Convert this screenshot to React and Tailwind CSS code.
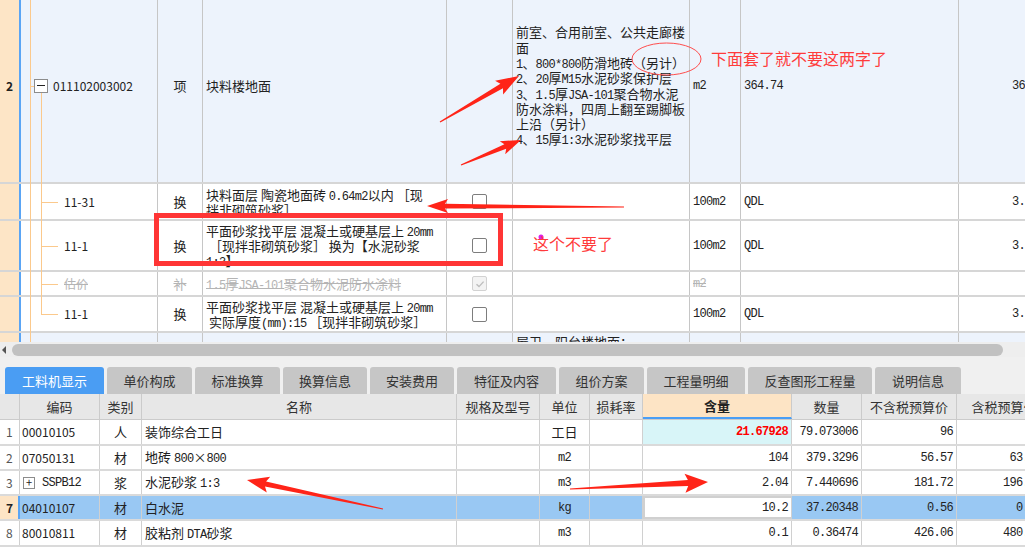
import React from "react";

const MONO = "font-['Liberation_Mono',monospace] text-[12px] tracking-[-0.7px]";
const LINE = "bg-[#fbc98c]";

// ascii runs look like SimSun half-width text in the reference, give them the mono face
function Mixed({ s }) {
  return (
    <span>
      {s.split(/([\x21-\x7e]+)/).map((p, i) =>
        i % 2 ? (
          <span key={i} className={MONO}>
            {p}
          </span>
        ) : (
          <React.Fragment key={i}>{p}</React.Fragment>
        )
      )}
    </span>
  );
}

function Tree({ kind }) {
  return (
    <>
      <span className={`absolute left-[9px] top-0 bottom-[-2px] w-px ${LINE}`} />
      {kind === "root" && (
        <>
          <span className={`absolute left-[9px] top-1/2 w-[5px] h-px ${LINE}`} />
          <span className={`absolute left-[20px] top-[calc(50%_+_7px)] bottom-[-2px] w-px ${LINE}`} />
          <span className="absolute left-[13px] top-1/2 -translate-y-1/2 w-[14px] h-[14px] border border-[#8c8c8c] bg-white flex items-center justify-center">
            <span className="w-[8px] h-px bg-[#222]" />
          </span>
        </>
      )}
      {kind === "child" && (
        <>
          <span className={`absolute left-[20px] top-0 bottom-[-2px] w-px ${LINE}`} />
          <span className={`absolute left-[20px] top-1/2 w-[17px] h-px ${LINE}`} />
        </>
      )}
      {kind === "last" && (
        <>
          <span className={`absolute left-[20px] top-0 h-1/2 w-px ${LINE}`} />
          <span className={`absolute left-[20px] top-1/2 w-[17px] h-px ${LINE}`} />
        </>
      )}
    </>
  );
}

function Box({ checked }) {
  if (checked)
    return (
      <span className="w-[15px] h-[15px] rounded-[2px] border border-[#d2d2d2] bg-[#f3f3f3] flex items-center justify-center">
        <svg width="10" height="10" viewBox="0 0 10 10">
          <path d="M1.5 5.2 L4 7.6 L8.6 2.6" fill="none" stroke="#bdbdbd" strokeWidth="1.4" />
        </svg>
      </span>
    );
  return <span className="w-[15px] h-[15px] rounded-[2px] border border-[#7d7d7d] bg-white" />;
}

function Lines({ lines, lh = "h-[15px] leading-[15px]" }) {
  return (
    <div className="flex flex-col">
      {lines.map((l, i) => (
        <div key={i} className={`whitespace-pre ${lh}`}>
          <Mixed s={l} />
        </div>
      ))}
    </div>
  );
}

function TopRow({ h, bg = "bg-white", num, tree, code, type, name, box, desc, descPad = "items-center", unit, expr, qty, muted }) {
  const txt = muted ? "text-[#b4b4b4] line-through" : "text-[#222]";
  return (
    <div className={`flex w-[1054px] ${h} ${bg} border-b-2 border-[#d6d6d6] ${txt}`}>
      <div className="w-[21px] shrink-0 bg-[#fde5c6] border-r-2 border-[#5aa5f5] flex items-center pl-[6px] text-[12px] font-bold text-[#222]">
        {num}
      </div>
      <div className={`relative w-[137px] shrink-0 border-r border-[#c6c6c6] flex items-center text-[12px] ${tree === "root" ? "pl-[32px]" : "pl-[43px]"}`}>
        <Tree kind={tree} />
        <span className="relative">{code}</span>
      </div>
      <div className="w-[45px] shrink-0 border-r border-[#c6c6c6] flex items-center justify-center text-[13px]">{type}</div>
      <div className="w-[244px] shrink-0 border-r border-[#c6c6c6] flex items-center px-[3px] text-[13px] overflow-hidden">{name}</div>
      <div className="w-[66px] shrink-0 border-r border-[#c6c6c6] flex items-center justify-center">{box && <Box checked={box === "checked"} />}</div>
      <div className={`w-[177px] shrink-0 border-r border-[#c6c6c6] flex ${descPad} pl-[3px] text-[13px] overflow-hidden`}>{desc}</div>
      <div className={`w-[51px] shrink-0 border-r border-[#c6c6c6] flex items-center pl-[3px] ${MONO}`}>{unit}</div>
      <div className={`w-[218px] shrink-0 border-r border-[#c6c6c6] flex items-center pl-[3px] ${MONO}`}>{expr}</div>
      <div className={`w-[95px] shrink-0 flex items-center justify-end pr-[3px] ${MONO}`}>{qty}</div>
    </div>
  );
}

function TopGrid() {
  return (
    <div className="h-[342px] overflow-hidden bg-[#edf3fc]">
      <TopRow
        h="h-[195px] mt-[-11px]"
        bg="bg-[#edf3fc]"
        num="2"
        tree="root"
        code="011102003002"
        type="项"
        name="块料楼地面"
        desc={
          <Lines
            lh="h-[15.3px] leading-[15.3px]"
            lines={[
              "前室、合用前室、公共走廊楼",
              "面",
              "1、800*800防滑地砖（另计）",
              "2、20厚M15水泥砂浆保护层",
              "3、1.5厚JSA-101聚合物水泥",
              "防水涂料，四周上翻至踢脚板",
              "上沿（另计）",
              "4、15厚1:3水泥砂浆找平层",
            ]}
          />
        }
        unit="m2"
        expr="364.74"
        qty="364.74"
      />
      <TopRow
        h="h-[37px]"
        tree="child"
        code="11-31"
        type="换"
        name={<Lines lines={["块料面层 陶瓷地面砖 0.64m2以内 ［现", "拌非砌筑砂浆］"]} />}
        box="empty"
        unit="100m2"
        expr="QDL"
        qty="3.6474"
      />
      <TopRow
        h="h-[51px]"
        tree="child"
        code="11-1"
        type="换"
        name={<Lines lines={["平面砂浆找平层 混凝土或硬基层上 20mm", " ［现拌非砌筑砂浆］ 换为【水泥砂浆", "1:3】"]} />}
        box="empty"
        unit="100m2"
        expr="QDL"
        qty="3.6474"
      />
      <TopRow
        h="h-[25px]"
        tree="child"
        code="估价"
        type="补"
        name={<Lines lines={["1.5厚JSA-101聚合物水泥防水涂料"]} />}
        box="checked"
        unit="m2"
        muted
      />
      <TopRow
        h="h-[36px]"
        tree="last"
        code="11-1"
        type="换"
        name={<Lines lines={["平面砂浆找平层 混凝土或硬基层上 20mm", " 实际厚度(mm):15 ［现拌非砌筑砂浆］"]} />}
        box="empty"
        unit="100m2"
        expr="QDL"
        qty="3.6474"
      />
      <TopRow
        h="h-[40px]"
        bg="bg-[#edf3fc]"
        tree="none"
        desc={<div className="pt-[1px] leading-[15px]">屋卫、阳台楼地面：</div>}
        descPad="items-start"
      />
    </div>
  );
}

function ScrollBar() {
  return (
    <div className="h-[15px] bg-[#eeeeee] flex items-center pl-[2px]">
      <span className="w-0 h-0 border-y-[4px] border-y-transparent border-r-[4px] border-r-[#555]" />
      <span className="ml-[6px] w-[991px] h-[12px] rounded-full bg-[#c1c1c1]" />
    </div>
  );
}

const TABS = [
  ["工料机显示", "w-[99px]"],
  ["单价构成", "w-[85px]"],
  ["标准换算", "w-[85px]"],
  ["换算信息", "w-[84px]"],
  ["安装费用", "w-[84px]"],
  ["特征及内容", "w-[99px]"],
  ["组价方案", "w-[85px]"],
  ["工程量明细", "w-[98px]"],
  ["反查图形工程量", "w-[124px]"],
  ["说明信息", "w-[86px]"],
];

function Tabs() {
  return (
    <div className="h-[37px] bg-[#f0f0f0] flex items-end gap-[3px] pl-[5px]">
      {TABS.map(([label, w], i) => (
        <div
          key={label}
          className={`${w} h-[27px] shrink-0 rounded-t-[3px] flex items-center justify-center text-[13px] ${
            i === 0 ? "bg-[#4a9df3] text-white" : "bg-[#c6c6c6] text-[#333]"
          }`}
        >
          {label}
        </div>
      ))}
    </div>
  );
}

const BW = ["w-[20px]", "w-[80px]", "w-[42px]", "w-[315px]", "w-[83px]", "w-[50px]", "w-[53px]", "w-[149px]", "w-[70px]", "w-[95px]", "w-[95px]"];
const HEAD = ["", "编码", "类别", "名称", "规格及型号", "单位", "损耗率", "含量", "数量", "不含税预算价", "含税预算价"];

const ROWS = [
  { n: "1", code: "00010105", type: "人", name: "装饰综合工日", unit: "工日", amt: "21.67928", qty: "79.073006", p1: "96", p2: "", h: "h-[26px]" },
  { n: "2", code: "07050131", type: "材", name: "地砖 800×800", unit: "m2", amt: "104", qty: "379.3296", p1: "56.57", p2: "63.92", h: "h-[25px]" },
  { n: "3", code: "SSPB12", plus: true, type: "浆", name: "水泥砂浆 1:3", unit: "m3", amt: "2.04", qty: "7.440696", p1: "181.72", p2: "196.85", h: "h-[25px]" },
  { n: "7", code: "04010107", type: "材", name: "白水泥", unit: "kg", amt: "10.2", qty: "37.20348", p1: "0.56", p2: "0.63", h: "h-[25px]", sel: true },
  { n: "8", code: "80010811", type: "材", name: "胶粘剂 DTA砂浆", unit: "m3", amt: "0.1", qty: "0.36474", p1: "426.06", p2: "480.21", h: "h-[26px]" },
];

function BottomTable() {
  return (
    <div className="w-[1052px]">
      <div className="flex h-[26px] bg-[#e7e7e7] border-b border-[#cbcbcb] text-[13px] text-[#333]">
        {HEAD.map((t, i) => (
          <div
            key={i}
            className={`${BW[i]} shrink-0 h-full border-r border-[#cbcbcb] flex items-center justify-center whitespace-nowrap overflow-hidden ${
              i === 7 ? "bg-[#fde4c5] font-bold text-[#222] border-b-2 border-b-[#4a9ef5]" : ""
            }`}
          >
            {t}
          </div>
        ))}
      </div>
      {ROWS.map((r) => {
        const c = "shrink-0 h-full border-r border-[#d0d0d0] flex items-center whitespace-nowrap overflow-hidden";
        return (
          <div key={r.n} className={`flex ${r.h} border-b-2 border-[#dadada] text-[#222] ${r.sel ? "bg-[#99c8f3]" : "bg-white"}`}>
            <div className={`${BW[0]} ${c} pl-[6px] text-[12px] ${r.sel ? "bg-[#fde4c5] font-bold border-r-2 border-r-[#5aa5f5]" : "bg-white text-[#555]"}`}>{r.n}</div>
            <div className={`${BW[1]} ${c} pl-[2px] text-[12px]`}>
              {r.plus && (
                <span className="w-[12px] h-[12px] ml-[1px] mr-[7px] border border-[#8c8c8c] bg-white flex items-center justify-center text-[11px] leading-none">
                  +
                </span>
              )}
              {r.plus ? <span className={MONO}>{r.code}</span> : r.code}
            </div>
            <div className={`${BW[2]} ${c} justify-center text-[13px]`}>{r.type}</div>
            <div className={`${BW[3]} ${c} pl-[3px] text-[13px]`}>
              <Mixed s={r.name} />
            </div>
            <div className={`${BW[4]} ${c}`} />
            <div className={`${BW[5]} ${c} justify-center ${r.unit === "工日" ? "text-[13px]" : MONO}`}>{r.unit}</div>
            <div className={`${BW[6]} ${c}`} />
            <div
              className={`${BW[7]} ${c} justify-end pr-[3px] ${MONO} ${
                r.n === "1" ? "bg-[#d8f5f8] text-[#f00] font-bold" : ""
              } ${r.sel ? "bg-white border-2 border-[#6e6e6e]" : ""}`}
            >
              {r.amt}
            </div>
            <div className={`${BW[8]} ${c} justify-end pr-[3px] ${MONO}`}>{r.qty}</div>
            <div className={`${BW[9]} ${c} justify-end pr-[3px] ${MONO}`}>{r.p1}</div>
            <div className={`${BW[10]} ${c} justify-end pr-[9px] ${MONO}`}>{r.p2}</div>
          </div>
        );
      })}
    </div>
  );
}

function arrow(x1, y1, x2, y2, w = 2.5, W = 7, h = 17, t = 0.6) {
  const dx = x2 - x1;
  const dy = y2 - y1;
  const L = Math.hypot(dx, dy);
  const ux = dx / L;
  const uy = dy / L;
  const vx = -uy;
  const vy = ux;
  const p = (a, b) => `${(x1 + ux * a + vx * b).toFixed(1)},${(y1 + uy * a + vy * b).toFixed(1)}`;
  return [p(0, t), p(L - h, w), p(L - h - 3, W), p(L, 0), p(L - h - 3, -W), p(L - h, -w), p(0, -t)].join(" ");
}

function Annotations() {
  return (
    <>
      <svg className="absolute left-0 top-0 pointer-events-none" width="1025" height="547" viewBox="0 0 1025 547">
        <ellipse cx="666.5" cy="59" rx="34.5" ry="16" fill="none" stroke="#ff4d4d" strokeWidth="1" />
        <rect x="156.5" y="215.5" width="344" height="48" fill="none" stroke="#ff3535" strokeWidth="5" />
        <polygon points={arrow(440, 122, 519, 76, 2.6, 8, 20)} fill="#ff2418" />
        <polygon points={arrow(461, 165, 521, 140, 2.4, 7, 17)} fill="#ff2418" />
        <polygon points={arrow(624, 207, 427, 206, 2.4, 7, 18)} fill="#ff2418" />
        <polygon points={arrow(383, 509, 247, 480, 2.6, 8, 19)} fill="#ff2418" />
        <polygon points={arrow(570, 489, 708, 482, 3, 9.5, 20)} fill="#ff2418" />
        <circle cx="541" cy="237" r="2.5" fill="#e01fe6" />
      </svg>
      <div className="absolute left-[711px] top-[49px] text-[16px] leading-[18px] text-[#ff3b3b] whitespace-nowrap">下面套了就不要这两字了</div>
      <div className="absolute left-[533px] top-[234px] text-[16px] leading-[18px] text-[#ff3b3b] whitespace-nowrap">这个不要了</div>
    </>
  );
}

export default function App() {
  return (
    <div className="relative w-[1025px] h-[547px] overflow-hidden bg-white font-['Noto_Sans_CJK_SC','Noto_Sans',sans-serif]">
      <TopGrid />
      <ScrollBar />
      <Tabs />
      <BottomTable />
      <Annotations />
    </div>
  );
}
